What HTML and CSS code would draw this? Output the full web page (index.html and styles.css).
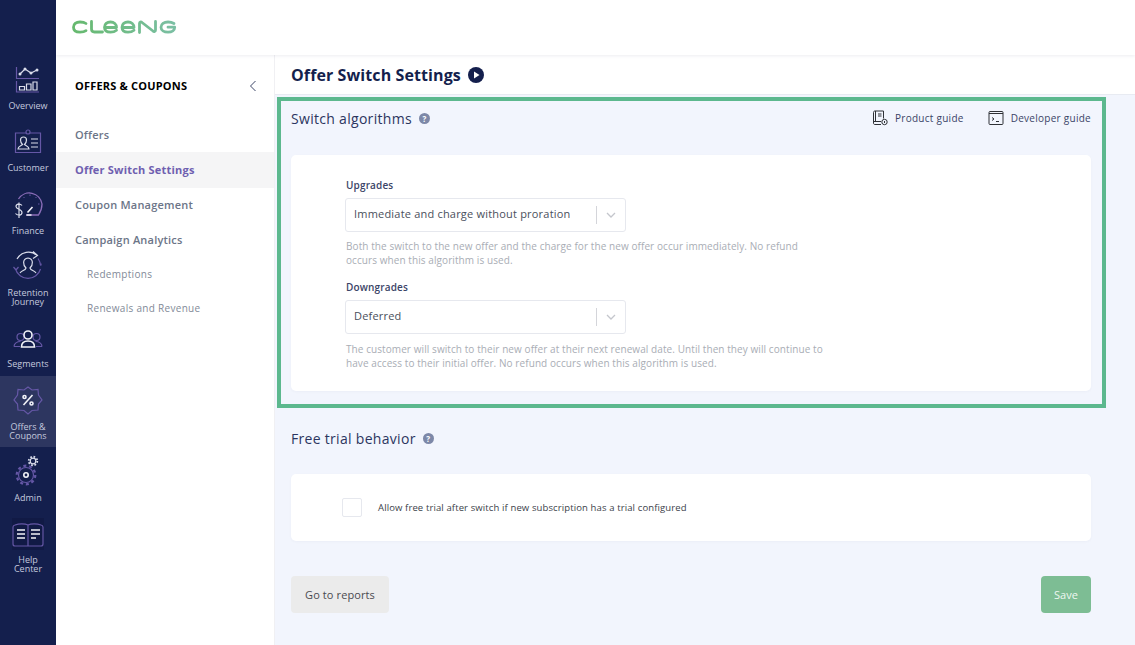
FILE: index.html
```html
<!DOCTYPE html>
<html lang="en">
<head>
<meta charset="utf-8">
<title>Offer Switch Settings</title>
<link rel="stylesheet" href="styles.css">
</head>
<body>
<div class="app">
  <nav class="rail">
    <a class="rail-item">
      <svg class="rail-icon" viewBox="0 0 32 32" fill="none"><path class="p" d="M4.500 5v11.500H27M4.500 19v11H27"/><path class="w" d="M8 12l5-5 6 4 6-3"/><circle class="wf" cx="8" cy="12" r="1.500"/><circle class="wf" cx="13" cy="7" r="1.500"/><circle class="wf" cx="19" cy="11" r="1.500"/><circle class="wf" cx="25" cy="8" r="1.500"/><path class="w" d="M7.500 24.500h5v3.500h-5zM14.500 22h4.500v6h-4.500zM21 20h4v8h-4z"/></svg>
      <span>Overview</span>
    </a>
    <a class="rail-item">
      <svg class="rail-icon" viewBox="0 0 32 32" fill="none"><path class="p" d="M14 7H3.500v19.500h25V7H18"/><circle class="p" cx="16" cy="6" r="2"/><path class="w" d="M6 23c0-3 3-3 4.500-4.500-1.500-1.500-2-3-2-4.500 0-2 1.300-3 3-3s3 1 3 3c0 1.500-.5 3-2 4.500 1.500 1.500 4.500 1.500 4.500 4.500z"/><path class="w" d="M19 13h7M19 17h7M19 21h7"/></svg>
      <span>Customer</span>
    </a>
    <a class="rail-item">
      <svg class="rail-icon" viewBox="0 0 32 32" fill="none"><path class="p2" d="M6.500 10A12.800 12.800 0 0 1 30 15c0 5-1.500 8-3.500 11H14"/><path class="ticks" d="M11.500 8l1 1M18 5.500V7M24.500 8l-1 1M27.500 15H26"/><path class="w" d="M10 16.500c-1.500-2-6-2-6 1s6 2.500 6 6-5 3-6.500 1M7 13.500V29"/><path class="w2" d="M15.500 23.500l5-5.500M14.500 26h5"/></svg>
      <span>Finance</span>
    </a>
    <a class="rail-item">
      <svg class="rail-icon" viewBox="0 0 32 32" fill="none"><path class="p" d="M3.500 19a13 13 0 0 0 25 0M29 13.500v2M1.500 17l2.500 3 2.500-3"/><path class="w" d="M5 9a13 13 0 0 1 20-3.500M21 1.500l4.500 4-4.500 3"/><path class="p" d="M26 8.500a13 13 0 0 1 2.500 7"/><path class="w" d="M8 23c2-3 5-2 6-5-3-3-4-9 2-10 6 1 5 7 2 10 1 3 4 2 6 5"/></svg>
      <span>Retention<br>Journey</span>
    </a>
    <a class="rail-item">
      <svg class="rail-icon" viewBox="0 0 32 32" fill="none"><circle class="p" cx="8.500" cy="15" r="3.500"/><circle class="p" cx="24.500" cy="15" r="3.500"/><path class="p" d="M2 24.500c0-3 3-5 6.500-5M30 24.500c0-3-3-5-6.500-5M2 24.500h6M24 24.500h6"/><circle class="w2" cx="16" cy="13" r="4"/><path class="w2" d="M9.500 25c0-4 2.500-6 6.500-6s6.500 2 6.500 6z"/></svg>
      <span>Segments</span>
    </a>
    <a class="rail-item is-active">
      <svg class="rail-icon" viewBox="0 0 32 32" fill="none"><path class="p" d="M16 3l4 3 6-.5.5 5.500 3.500 5-3.500 4-.5 6-6 .5-4 3.500-4-3.500-6-.5-.5-6L2 16l3.500-5L6 5.500l6 .5z"/><path class="w2" d="M11.500 21l9-10"/><circle class="w2" cx="12.500" cy="13" r="1.500"/><circle class="w2" cx="19.500" cy="19.500" r="1.500"/></svg>
      <span>Offers &amp;<br>Coupons</span>
    </a>
    <a class="rail-item">
      <svg class="rail-icon" viewBox="0 0 32 32" fill="none"><circle class="p" cx="14" cy="20" r="7.500"/><circle class="p gear" cx="14" cy="20" r="9.300"/><circle class="w2" cx="14" cy="20" r="2.200"/><circle class="w" cx="21" cy="6" r="2.800"/><circle class="w gear-small" cx="21" cy="6" r="4.300"/></svg>
      <span>Admin</span>
    </a>
    <a class="rail-item">
      <svg class="rail-icon" viewBox="0 0 32 32" fill="none"><rect class="book-bg" x="0" y="-1" width="32" height="32"/><path class="p" d="M16 6c-3-1.500-9-1.500-13 0-1 .3-2 1-2 2v17c0 1.500 1 2 2 2h26c1 0 2-.5 2-2V8c0-1-1-1.700-2-2-4-1.500-10-1.500-13 0zM16 6v21"/><path class="w2" d="M5 11h8M5 15h8M5 19h8M19 11h9M19 15h9M19 19h5"/></svg>
      <span>Help<br>Center</span>
    </a>
  </nav>

  <div class="workspace">
    <header class="topbar">
      <svg class="logo" viewBox="0 0 105 14" fill="none" aria-label="Cleeng">
        <defs><linearGradient id="lg" gradientUnits="userSpaceOnUse" x1="0" x2="105" y1="0" y2="0"><stop offset="0" stop-color="#66b96e"/><stop offset="1" stop-color="#7bbfa4"/></linearGradient></defs>
        <g stroke="url(#lg)" stroke-width="2.800" stroke-linecap="round" stroke-linejoin="round">
          <path d="M14 3.500C12 2 10 2 8 2 4 2 1.500 4 1.500 7.200S4 12.200 8 12.200c2 0 4 0 6-1.500"/>
          <path d="M19.500 1.500V9c0 2 1 3 3 3h8"/>
          <path d="M33 7.500h11.500C44.500 4 42 2 38.500 2S32.500 4 32.500 7.200s2.500 5 6 5c2.500 0 4.500-.7 6-2"/>
          <path d="M50.500 7.500H62C62 4 59.500 2 56 2s-6 2-6 5.200 2.500 5 6 5c2.500 0 4.500-.7 6-2"/>
          <path d="M67.500 12.500V3.500c0-1.500 1.500-2 2.500-1L81 11c1 1 2.500.5 2.500-1V1.500"/>
          <path d="M102 3.500C100 2.300 98 2 96 2c-4 0-7 2-7 5.200s3 5 7 5 6.700-2 6.700-5H96"/>
        </g>
      </svg>
    </header>
    <div class="body">
      <aside class="subnav">
        <div class="subnav-head">
          <h2>OFFERS &amp; COUPONS</h2>
          <svg class="collapse" viewBox="0 0 8 12" fill="none"><path d="M6.500 1L1.500 6l5 5"/></svg>
        </div>
        <ul class="subnav-list">
          <li>Offers</li>
          <li class="current">Offer Switch Settings</li>
          <li>Coupon Management</li>
          <li>Campaign Analytics</li>
          <li class="sub">Redemptions</li>
          <li class="sub">Renewals and Revenue</li>
        </ul>
      </aside>
      <main class="content">
        <div class="titlebar">
          <h1>Offer Switch Settings</h1>
          <svg class="play" viewBox="0 0 16 16"><circle cx="8" cy="8" r="8" fill="#141f4d"/><path d="M6 4.500v7l5.500-3.500z" fill="#fff"/></svg>
        </div>
        <div class="panel">
          <section class="highlight">
            <div class="section-head">
              <h3>Switch algorithms</h3>
              <span class="help">?</span>
              <div class="guides">
                <a class="guide">
                  <svg viewBox="0 0 16 16" fill="none"><path d="M3 1h8.500v7.500M3 1C2 1 1.500 1.500 1.500 2.500V13c0 1 .5 1.500 1.500 1.500h6M3.500 1v10.500M1.500 11.500H9M6 4h3.500M6 6h3.500"/><circle cx="12.500" cy="12" r="2.700"/><path d="M12.500 11v2"/></svg>
                  Product guide
                </a>
                <a class="guide">
                  <svg viewBox="0 0 16 16" fill="none"><rect x="1" y="1.500" width="14" height="13" rx="1"/><path d="M1 3.500h14" stroke-width="1.800"/><path d="M4 7.500l2 1.500-2 1.500M8 11.500h3"/></svg>
                  Developer guide
                </a>
              </div>
            </div>
            <div class="card algo">
              <div class="field">
                <label>Upgrades</label>
                <div class="select"><span>Immediate and charge without proration</span><i class="sep"></i><svg viewBox="0 0 10 6" fill="none"><path d="M1 1l4 4 4-4"/></svg></div>
                <p>Both the switch to the new offer and the charge for the new offer occur immediately. No refund occurs when this algorithm is used.</p>
              </div>
              <div class="field">
                <label>Downgrades</label>
                <div class="select"><span>Deferred</span><i class="sep"></i><svg viewBox="0 0 10 6" fill="none"><path d="M1 1l4 4 4-4"/></svg></div>
                <p class="wide">The customer will switch to their new offer at their next renewal date. Until then they will continue to have access to their initial offer. No refund occurs when this algorithm is used.</p>
              </div>
            </div>
          </section>
          <section class="trial">
            <div class="section-head">
              <h3>Free trial behavior</h3>
              <span class="help">?</span>
            </div>
            <div class="card check-card">
              <span class="checkbox"></span>
              <span class="check-label">Allow free trial after switch if new subscription has a trial configured</span>
            </div>
          </section>
          <div class="actions">
            <button class="btn ghost">Go to reports</button>
            <button class="btn save">Save</button>
          </div>
        </div>
      </main>
    </div>
  </div>
</div>
</body>
</html>
```

FILE: styles.css
```css
* { box-sizing: border-box; }
html, body { margin: 0; height: 100%; overflow: hidden; }
body { font-family: "Open Sans", sans-serif; color: #141f4d; background: #fff; }
h1, h2, h3, p, ul { margin: 0; padding: 0; }
.app { display: flex; width: 1135px; height: 645px; }

.rail { width: 56px; flex: none; background: #141f4d; padding-top: 54px; display: flex; flex-direction: column; }
.rail-item { display: flex; flex-direction: column; align-items: center; padding-top: 8px; color: #c4c9de; font-size: 9px; line-height: 9px; text-align: center; }
.rail-item span { display: block; margin-top: 5px; }
.rail-icon { width: 32px; height: 32px; flex: none; overflow: visible; }
.rail-icon .p { stroke: #6557a6; stroke-width: 1.200; }
.rail-icon .p2 { stroke: #8a6db8; stroke-width: 1.300; }
.rail-icon .ticks { stroke: #6557a6; stroke-width: 1; }
.rail-icon .w { stroke: #d9dcea; stroke-width: 1.200; }
.rail-icon .w2 { stroke: #f2f3f8; stroke-width: 1.600; }
.rail-icon .wf { fill: #d9dcea; }
.rail-icon .gear { stroke-width: 2.200; stroke-dasharray: 3 2.840; }
.rail-icon .gear-small { stroke-width: 1.800; stroke-dasharray: 1.700 1.676; }
.rail-icon .book-bg { fill: #111a45; }
.rail-item:nth-child(1) { height: 64px; }
.rail-item:nth-child(1) span { margin-top: 7px; }
.rail-item:nth-child(2) { height: 63px; }
.rail-item:nth-child(3) { height: 61px; }
.rail-item:nth-child(4) { height: 72px; }
.rail-item:nth-child(4) span { margin-top: 6px; }
.rail-item:nth-child(5) { height: 62px; }
.rail-item:nth-child(6) { height: 71px; }
.rail-item:nth-child(6) span { margin-top: 6px; }
.rail-item:nth-child(7) { height: 64px; }
.rail-item:nth-child(7) span { margin-top: 6px; }
.rail-item:nth-child(8) { height: 70px; }
.rail-item:nth-child(8) span { margin-top: 4px; }
.is-active { background: #2d3660; }

.workspace { flex: 1; min-width: 0; display: flex; flex-direction: column; }
.topbar { height: 55px; flex: none; padding: 20px 0 0 16px; background: #fff; box-shadow: 0 1px 3px rgba(20, 31, 77, .08); position: relative; }
.logo { display: block; width: 105px; height: 14px; }
.body { flex: 1; display: flex; min-height: 0; }

.subnav { width: 219px; flex: none; background: #fff; border-right: 1px solid #f0f0f3; }
.subnav-head { display: flex; align-items: center; justify-content: space-between; padding: 0 17px 0 19px; height: 62px; }
.subnav-head h2 { font-size: 11px; font-weight: 700; color: #000; letter-spacing: .2px; line-height: 16px; }
.collapse { width: 8px; height: 12px; }
.collapse path { stroke: #3b4467; stroke-width: 1; }
.subnav-list { list-style: none; }
.subnav-list li { height: 35px; line-height: 35px; padding-left: 19px; font-size: 11px; font-weight: 600; color: #6c7588; letter-spacing: .2px; }
.subnav-list .current { background: #f5f5f6; color: #6f5fb0; font-weight: 700; height: 36px; line-height: 36px; margin-bottom: -1px; }
.subnav-list .sub { height: 34px; line-height: 34px; padding-left: 31px; font-size: 10px; font-weight: 400; color: #828a98; letter-spacing: .3px; }

.content { flex: 1; min-width: 0; display: flex; flex-direction: column; background: #f2f5fd; }
.titlebar { height: 40px; flex: none; display: flex; align-items: center; gap: 7px; padding-left: 16px; background: #fff; border-bottom: 1px solid #e8ebf2; }
.titlebar h1 { font-size: 16px; font-weight: 700; color: #141f4d; letter-spacing: .1px; }
.play { width: 16px; height: 16px; }
.panel { flex: 1; padding: 2px 29px 0 2px; }
.highlight { height: 311px; border: 4px solid #5cb88e; padding: 0 11px 0 10px; }
.section-head { display: flex; align-items: center; height: 34px; }
.highlight .section-head { margin-bottom: 20px; }
.section-head h3 { font-size: 14px; font-weight: 400; color: #2c3560; letter-spacing: .3px; }
.help { width: 11px; height: 11px; margin-left: 7px; margin-top: 1px; border-radius: 50%; background: #7d88a8; color: #fff; font-size: 8px; font-weight: 700; line-height: 11px; text-align: center; }
.guides { margin-left: auto; display: flex; gap: 24px; }
.guide { display: flex; align-items: center; gap: 7px; font-size: 10px; color: #3b4467; letter-spacing: .27px; }
.guide svg { width: 16px; height: 16px; }
.guide svg * { stroke: #2f3136; stroke-width: 1; }
.card { background: #fff; border-radius: 5px; box-shadow: 0 1px 3px rgba(20, 31, 77, .03); }
.algo { height: 236px; padding: 23px 0 0 54px; }
.field { width: 500px; }
.field + .field { margin-top: 13px; }
.field label { display: block; font-size: 10px; font-weight: 600; line-height: 14px; color: #3b4467; margin-left: 1px; letter-spacing: .15px; }
.select { width: 281px; height: 34px; margin-top: 6px; display: flex; align-items: center; padding: 0 9px 0 8px; border: 1px solid #e6e8ee; border-radius: 3px; background: #fff; font-size: 11px; color: #4a4f5c; letter-spacing: .2px; }
.select span { flex: 1; padding-bottom: 3px; }
.sep { width: 1px; height: 18px; background: #d4d5da; margin-right: 9px; }
.select svg { width: 10px; height: 6px; }
.select svg path { stroke: #c4c6cc; stroke-width: 1.300; }
.field p { width: 458px; margin: 7px 0 0 1px; font-size: 10px; line-height: 14px; color: #a9adb5; letter-spacing: .08px; }
.field p.wide { width: 488px; margin-top: 8px; }

.trial { padding: 13px 15px 0 14px; }
.trial .section-head { margin-bottom: 19px; }
.check-card { height: 67px; display: flex; align-items: center; padding-left: 51px; }
.checkbox { width: 20px; height: 19px; border: 1px solid #e6e8ee; border-radius: 2px; background: #fff; }
.check-label { margin-left: 16px; font-size: 9.500px; color: #3b3f4a; letter-spacing: .12px; }
.actions { display: flex; justify-content: space-between; padding: 35px 15px 0 14px; }
.btn { height: 37px; border: 0; border-radius: 4px; font-family: inherit; font-size: 11px; letter-spacing: .1px; }
.ghost { width: 98px; background: #ebebeb; color: #4a4a4f; }
.save { width: 50px; background: #7dbd94; color: #eef7f1; }
```
